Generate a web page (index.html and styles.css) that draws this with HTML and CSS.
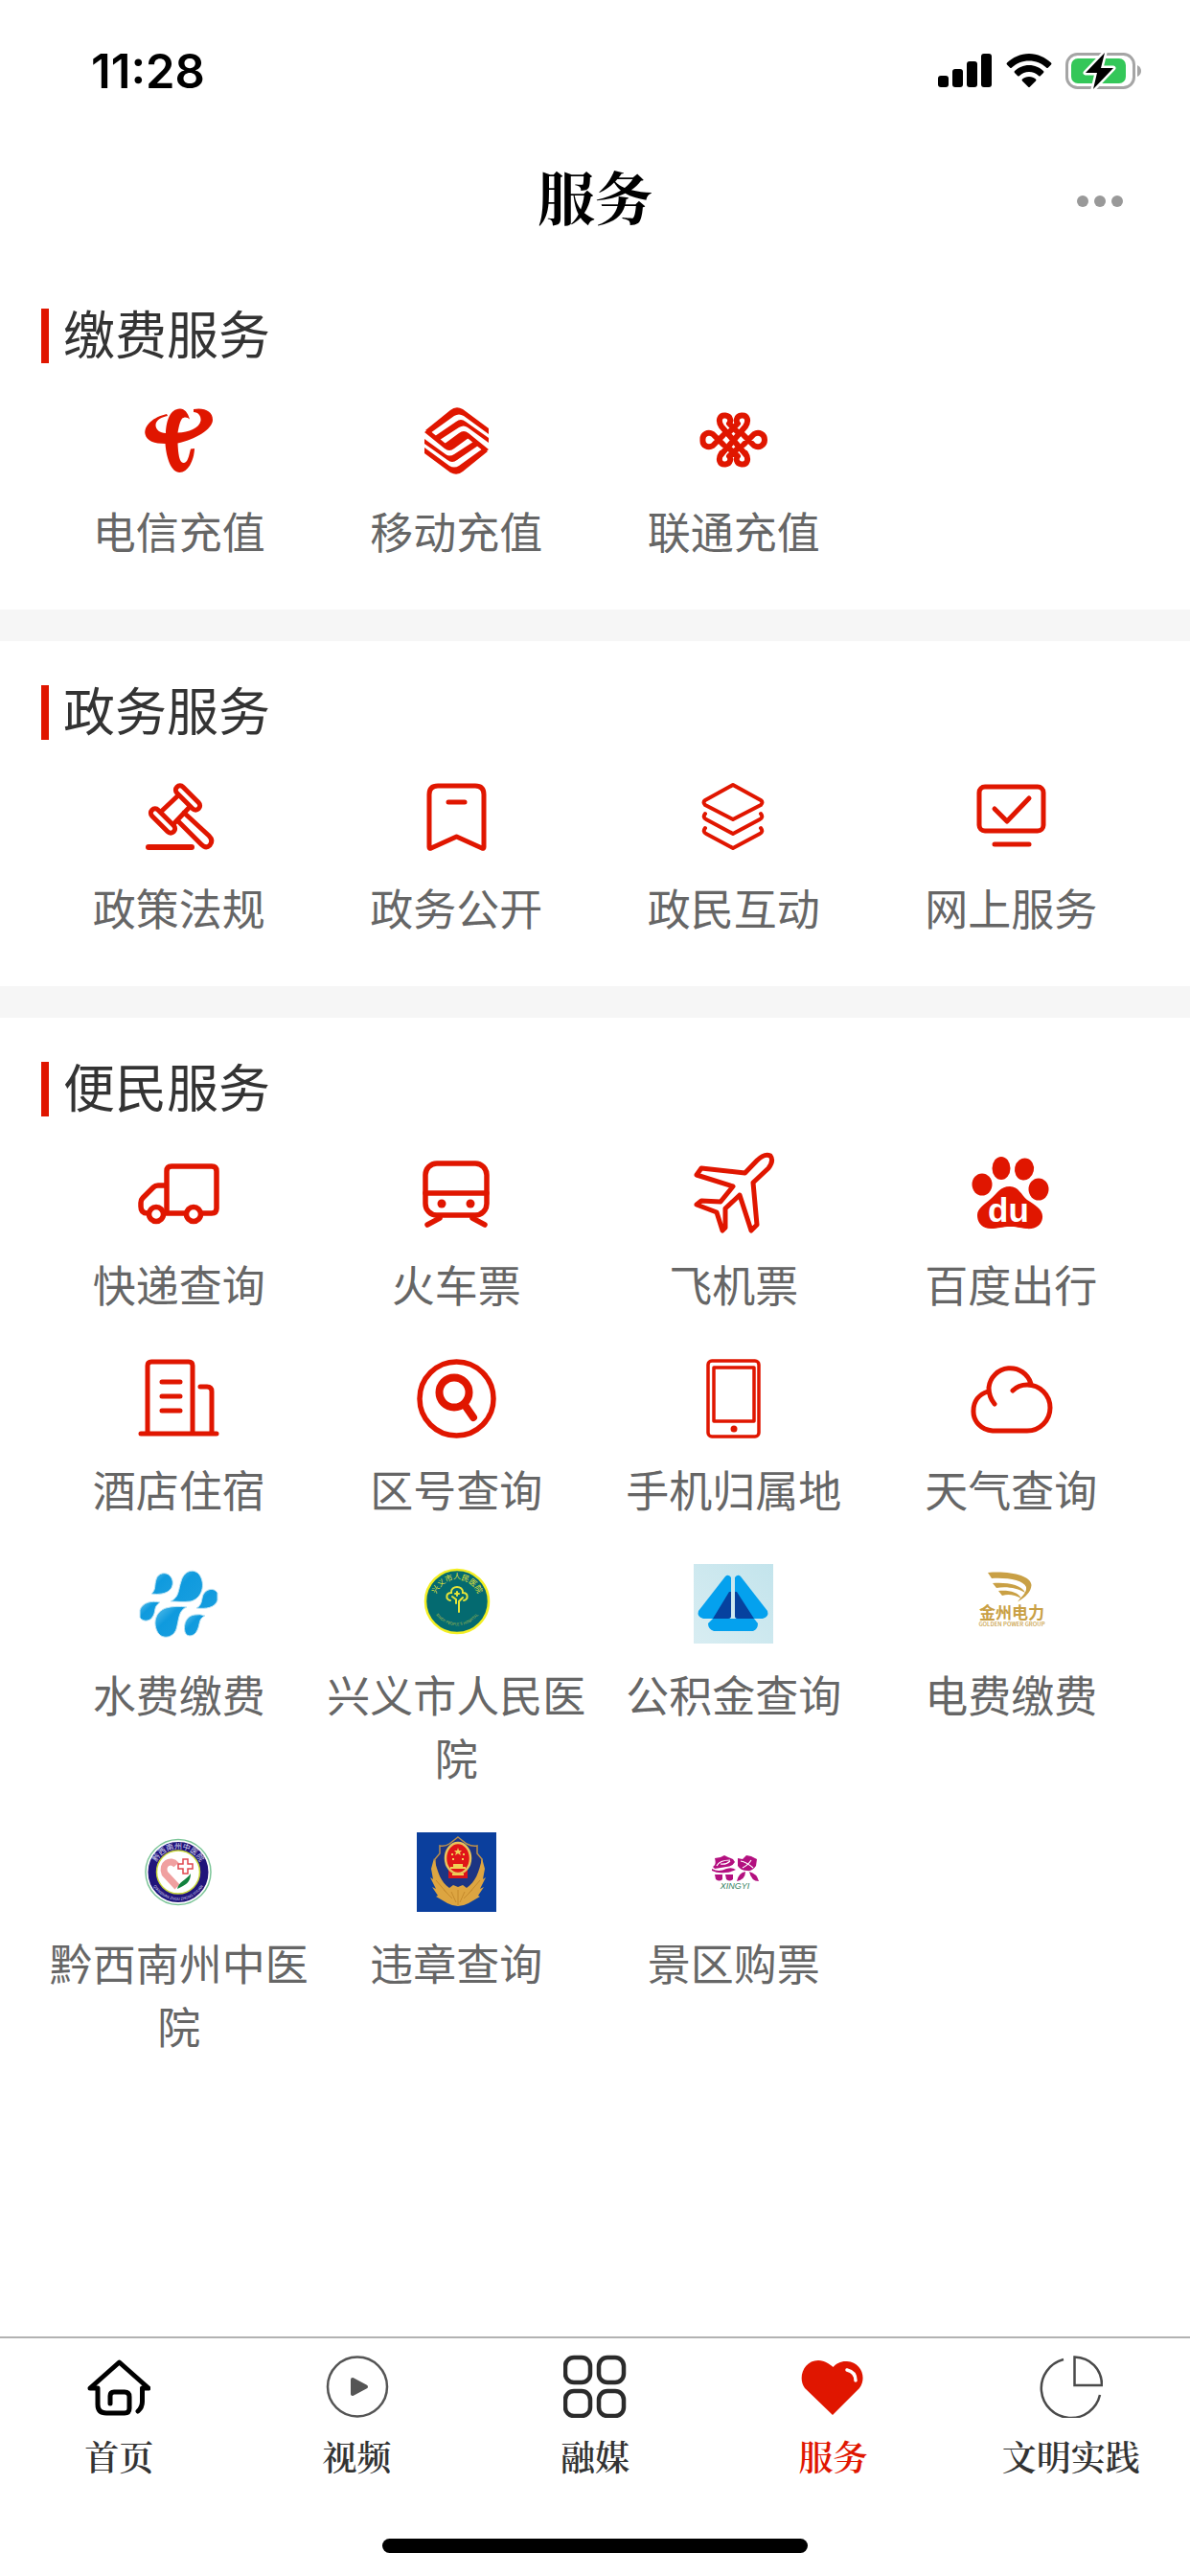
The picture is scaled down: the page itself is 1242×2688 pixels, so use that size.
FILE: index.html
```html
<!DOCTYPE html>
<html lang="zh-CN">
<head>
    <meta charset="UTF-8">
    <meta name="viewport" content="width=device-width, initial-scale=1.0">
    <title>服务</title>
    <link rel="stylesheet" href="styles.css">
</head>
<body>
    <div class="status-bar">
        <span class="time">11:28</span>
        <div class="status-icons">
            <svg width="57" height="36" viewBox="0 0 57 36">
                <rect x="0" y="23" width="11" height="12" rx="3"/>
                <rect x="15" y="16" width="11" height="19" rx="3"/>
                <rect x="30" y="8" width="11" height="27" rx="3"/>
                <rect x="45" y="0" width="11" height="35" rx="3"/>
            </svg>
            <svg width="48" height="36" viewBox="0 0 48 36">
                <path d="M24 0C33 0 41 4 47 9.500Q48 10.500 47 11.500L44 14.500Q43 15.500 42 14.500C37 10 31 7.500 24 7.500S11 10 6 14.500Q5 15.500 4 14.500L1 11.500Q0 10.500 1 9.500C7 4 15 0 24 0Z"/>
                <path d="M24 12C30 12 35 14.500 39 18Q40 19 39 20L36 23Q35 24 34 23C31 20.500 28 19 24 19S17 20.500 14 23Q13 24 12 23L9 20Q8 19 9 18C13 14.500 18 12 24 12Z"/>
                <path d="M24 24C27 24 29 25 31 26.500Q32 27.500 31 28.500L25 34.500Q24 35.500 23 34.500L17 28.500Q16 27.500 17 26.500C19 25 21 24 24 24Z"/>
            </svg>
            <svg width="80" height="40" viewBox="0 0 80 40">
                <rect x="1.500" y="2.500" width="70" height="35" rx="11" fill="none" stroke="#a5a5a5" stroke-width="3"/>
                <path d="M75 14Q79 16 79 20T75 26Z" fill="#a5a5a5"/>
                <rect x="6" y="7" width="57" height="26" rx="7" fill="#34c759"/>
                <path d="M41 1L21 22H33L29 39L50 17H37Z" stroke="#fff" stroke-width="5" stroke-linejoin="round"/>
                <path d="M41 1L21 22H33L29 39L50 17H37Z"/>
            </svg>
        </div>
    </div>

    <header class="header">
        <h1>服务</h1>
        <button class="more" aria-label="更多"><i></i><i></i><i></i></button>
    </header>

    <main class="content">
        <section class="section">
            <h2>缴费服务</h2>
            <div class="grid">
                <a class="item" href="#">
                    <svg class="icon solid" viewBox="0 0 83 83"><path d="M29 14C15 17 5 26 6.500 35C8 42 16 45 27.500 45C28.500 60 34 75 42.500 75C51 75 57.500 63 58 50L54 50.500C52 58 51 65 46.500 65C42 65 41 55 40.500 44.500C58 41 77 30 77 20C77 11 68 7 57 9L57 12C62 12 65 16 64.500 21C63 29 52 33 40.500 33.500C42 25 44 18 46.500 18C49 17 51 18 53 19.500C51 12 47 8 42.500 8.500C33 9 28.500 20 28 34C22 34 17 30 17.500 25C18 20 24 17 30 16Z"/></svg>
                    <span>电信充值</span>
                </a>
                <a class="item" href="#">
                    <svg class="icon solid" viewBox="0 0 83 83">
                        <g id="half">
                            <path d="M9 31L35 10Q41 5 48 9L75 29V35L49 16Q44 13 39 16L14 34Z"/>
                            <path d="M19 37L41 22Q46 18 51 22L75 39V44L53 28Q49 25 44 28L24 41Z"/>
                            <path d="M29 45L44 34Q49 30 54 34L75 51L71 54L54 40Q50 37 46 40L35 49Z"/>
                        </g>
                        <use href="#half" transform="rotate(180 41.500 42)"/>
                    </svg>
                    <span>移动充值</span>
                </a>
                <a class="item" href="#">
                    <svg class="icon line" viewBox="0 0 83 83" stroke-width="6">
                        <path d="M29 56L54 27C58 21 56 15 50 15.500C44 16 44 22 46 24L37 33M54 56L29 27C25 21 27 15 33 15.500C39 16 39 22 37 24L46 33"/>
                        <path d="M54 55C58 61 56 67 50 66.500C44 66 44 60 46 58L37 50M29 55C25 61 27 67 33 66.500C39 66 39 60 37 58L46 50"/>
                        <path d="M31 36L20 47C15 50 9 47 9.500 41C9 35 15 32 20 35L31 46M52 36L63 47C68 50 74 47 74 41S68 32 63 35L52 46"/>
                    </svg>
                    <span>联通充值</span>
                </a>
            </div>
        </section>

        <section class="section">
            <h2>政务服务</h2>
            <div class="grid">
                <a class="item" href="#">
                    <svg class="icon line" viewBox="0 0 83 83">
                        <rect x="35" y="17" width="32" height="9" rx="4.500" transform="rotate(45 51 21.500)"/>
                        <rect x="9" y="41" width="32" height="9" rx="4.500" transform="rotate(45 25 45.500)"/>
                        <path d="M41 19L23 36M53 31L36 49M47 37L73 61Q78 66 74 71Q70 75 65 70L40 45"/>
                        <path d="M10 73H55" stroke-width="6"/>
                    </svg>
                    <span>政策法规</span>
                </a>
                <a class="item" href="#">
                    <svg class="icon line" viewBox="0 0 83 83">
                        <path d="M13 73V18Q13 9 22 9H61Q70 9 70 18V73Q70 75 68 74L41.500 62L15 74Q13 75 13 73Z"/>
                        <path d="M33 26H50" stroke-width="5"/>
                    </svg>
                    <span>政务公开</span>
                </a>
                <a class="item" href="#">
                    <svg class="icon line" viewBox="0 0 83 83" stroke-width="4">
                        <path d="M41 8L70 24Q73 26 70 29L41 44L12 29Q9 26 12 24ZM12 38Q9 42 13 44L41 59L69 44Q73 42 70 38M12 53Q9 57 13 59L41 74L69 59Q73 57 70 53"/>
                    </svg>
                    <span>政民互动</span>
                </a>
                <a class="item" href="#">
                    <svg class="icon line" viewBox="0 0 83 83">
                        <rect x="8" y="10" width="67" height="46" rx="6"/>
                        <path d="M24 33L37 46L60 22"/>
                        <path d="M24 70H60" stroke-width="5"/>
                    </svg>
                    <span>网上服务</span>
                </a>
            </div>
        </section>

        <section class="section">
            <h2>便民服务</h2>
            <div class="grid">
                <a class="item" href="#">
                    <svg class="icon line" viewBox="0 0 83 83" stroke-width="5.500">
                        <path d="M29 61V18Q29 13 34 13H76Q81 13 81 18V57Q81 62 76 62H66M48 62H27M29 33H20Q17 33 15 35L4 46Q2 48 2 51V55Q2 62 9 62"/>
                        <circle cx="18" cy="63" r="7.500"/>
                        <circle cx="57" cy="63" r="7.500"/>
                    </svg>
                    <span>快递查询</span>
                </a>
                <a class="item" href="#">
                    <svg class="icon line" viewBox="0 0 83 83" stroke-width="5.500">
                        <rect x="9" y="10" width="64" height="54" rx="12"/>
                        <path d="M9 41H73M24 67L11 74M58 67L71 74"/>
                        <g class="dots"><circle cx="26" cy="52" r="4.500"/><circle cx="56" cy="52" r="4.500"/></g>
                    </svg>
                    <span>火车票</span>
                </a>
                <a class="item" href="#">
                    <svg class="icon line" viewBox="0 0 83 83">
                        <path d="M53.500 20L66 7Q74 -1 80 2Q84 7 78 15L62 30L66 74L60 80L48 43L33 57V77L30 80L24 61L3 53L8 49L28 50L41 34L3 22L8 15Z"/>
                    </svg>
                    <span>飞机票</span>
                </a>
                <a class="item" href="#">
                    <svg class="icon solid" viewBox="0 0 83 83">
                        <ellipse cx="11" cy="32" rx="10.500" ry="11.500"/>
                        <ellipse cx="31" cy="15" rx="9.500" ry="12"/>
                        <ellipse cx="55" cy="16" rx="10" ry="11.500" transform="rotate(12 55 16)"/>
                        <ellipse cx="70" cy="37" rx="10.500" ry="11.500"/>
                        <path d="M40 34C49 34 52 43 58 48C67 54 75 58 74 67C73 75 66 79 57 78C50 77 46 76 40 76C32 76 28 78 20 78C11 78 6 72 6 64C6 57 13 53 20 47C27 41 30 34 40 34Z"/>
                        <text class="du" x="17" y="71">du</text>
                    </svg>
                    <span>百度出行</span>
                </a>
                <a class="item" href="#">
                    <svg class="icon line" viewBox="0 0 83 83" stroke-width="5">
                        <path d="M9 77V7Q9 3 13 3H52Q56 3 56 7V77M64 29H71Q76 29 76 34V77M2 78H81M24 24H43M24 39H43M24 54H43"/>
                    </svg>
                    <span>酒店住宿</span>
                </a>
                <a class="item" href="#">
                    <svg class="icon line" viewBox="0 0 83 83" stroke-width="5.500">
                        <circle cx="41.500" cy="41.500" r="38.500"/>
                        <g stroke-width="8"><circle cx="39" cy="35" r="15.500"/><path d="M50 48L59 61"/></g>
                    </svg>
                    <span>区号查询</span>
                </a>
                <a class="item" href="#">
                    <svg class="icon line" viewBox="0 0 83 83" stroke-width="3.500">
                        <rect x="15" y="2" width="53" height="79" rx="4"/>
                        <rect x="21" y="9" width="42" height="56"/>
                        <g class="dots"><circle cx="42" cy="73" r="3.500"/></g>
                    </svg>
                    <span>手机归属地</span>
                </a>
                <a class="item" href="#">
                    <svg class="icon line" viewBox="0 0 83 83">
                        <path d="M24 47C19 41 18 36 18 30A22.500 22.500 0 0 1 62 26M43 33C48 28 54 27 58 27A24 24 0 0 1 58 75H22C10 74 1.500 65 2 54C2 44 8 37 17 34"/>
                    </svg>
                    <span>天气查询</span>
                </a>
                <a class="item" href="#">
                    <svg class="icon" viewBox="0 0 83 83">
                        <defs>
                            <linearGradient id="water" x1="0" y1="0" x2="1" y2="1">
                                <stop offset="0" stop-color="#5cc0ea"/>
                                <stop offset=".4" stop-color="#0f9ade"/>
                                <stop offset="1" stop-color="#1a9fdf"/>
                            </linearGradient>
                        </defs>
                        <g fill="url(#water)" stroke="#bfe5f5" stroke-width="1">
                            <path d="M13 31C18 27 16 22 18 16C20 9 28 8 32 12C38 18 36 29 24 31Q19 32 13 31Z"/>
                            <path d="M33 39C42 35 41 27 44 18C47 7 57 4 63 11C70 21 66 36 54 39C46 40 39 39 33 39Z"/>
                            <path d="M60 46C66 43 65 38 67 32C70 26 78 24 82 30V38C79 46 70 47 60 46Z"/>
                            <path d="M22 40C15 45 18 48 15 54C12 60 5 61 1 56V48C4 40 13 38 22 40Z"/>
                            <path d="M50 45C41 48 42 58 39 68C36 77 25 79 20 72C14 62 17 50 28 46C35 44 43 44 50 45Z"/>
                            <path d="M69 54C62 57 64 63 61 69C58 76 50 77 48 71C46 62 50 54 58 53Q64 52 69 54Z"/>
                        </g>
                    </svg>
                    <span>水费缴费</span>
                </a>
                <a class="item" href="#">
                    <svg class="icon" viewBox="0 0 83 83">
                        <defs>
                            <path id="arc1" d="M20 46A23 23 0 1 1 64 46"/>
                            <path id="arc2" d="M15 42A27.500 27.500 0 0 0 69 42"/>
                        </defs>
                        <circle cx="42" cy="39" r="33" fill="#046a70" stroke="#f3ee22" stroke-width="2.500"/>
                        <g fill="none" stroke="#e6e437" stroke-width="2" stroke-linecap="round">
                            <path d="M44 50V39L48 35M41 41V37L37 34M35 38C30 37 30 30 36 30C35 22 49 22 48 30C54 30 54 37 49 38M42 29V33M40 31H44"/>
                        </g>
                        <text class="seal"><textPath href="#arc1" startOffset="50%">兴义市人民医院</textPath></text>
                        <text class="seal-en"><textPath href="#arc2" startOffset="50%">XINGYI PEOPLE'S HOSPITAL</textPath></text>
                    </svg>
                    <span>兴义市人民医院</span>
                </a>
                <a class="item" href="#">
                    <svg class="icon" viewBox="0 0 83 83">
                        <defs>
                            <linearGradient id="sky" x1="1" y1="0" x2="0" y2="1">
                                <stop offset="0" stop-color="#c3e4ec"/>
                                <stop offset="1" stop-color="#d8edf2"/>
                            </linearGradient>
                        </defs>
                        <rect width="83" height="83" fill="url(#sky)"/>
                        <g fill="#04a1ee">
                            <path d="M33 13Q36 10 39 14V54Q39 57 36 57H10Q3 55 5 49Z"/>
                            <path d="M49 13Q46 10 43 14V54Q43 57 46 57H72Q79 55 77 49Z"/>
                            <path d="M20 57H63L67 62Q67 68 62 70H21Q15 68 15 62Z"/>
                        </g>
                        <path d="M37 29H39V54Q39 57 36 57H20ZM43 29H45L63 57H46Q43 57 43 54Z" fill="#06429f"/>
                    </svg>
                    <span>公积金查询</span>
                </a>
                <a class="item" href="#">
                    <svg class="icon gold" viewBox="0 0 83 83">
                        <path d="M17 9C40 7 62 12 62.500 22C62 29 57 34 48 39.500C52 34 58 30 57 24C54 17 38 14 21 15Z"/>
                        <path d="M22 20C36 19 52 21 56 30C48 25 36 23 26 25Z"/>
                        <path d="M28 28C38 27 49 29 52 36C45 32 38 31 32 33Z"/>
                        <text x="42" y="57" font-size="17" font-weight="700">金州电力</text>
                        <text x="42" y="65" font-size="6" font-weight="500">GOLDEN POWER GROUP</text>
                    </svg>
                    <span>电费缴费</span>
                </a>
                <a class="item" href="#">
                    <svg class="icon" viewBox="0 0 83 83">
                        <defs>
                            <path id="arc3" d="M16.500 47A25 25 0 1 1 65.500 47"/>
                            <path id="arc4" d="M11 41A30 30 0 0 0 71 41"/>
                        </defs>
                        <circle cx="41" cy="41.500" r="34" fill="#fff" stroke="#7cc598" stroke-width="1.500"/>
                        <circle cx="41" cy="41.500" r="27" fill="none" stroke="#20147a" stroke-width="9"/>
                        <circle cx="41" cy="41.500" r="22.500" fill="none" stroke="#c9d838" stroke-width="1.500"/>
                        <path d="M39 34C33 27 23 33 27 43L40 57" fill="none" stroke="#f0a0a0" stroke-width="7"/>
                        <path d="M46 28H51V33H56V38H51V43H46V38H41V33H46Z" fill="#fff" stroke="#e0474f" stroke-width="1.500"/>
                        <path d="M40 59C42 51 48 51 54 43C54 52 49 55 40 59Z" fill="#12813d"/>
                        <text class="seal light"><textPath href="#arc3" startOffset="50%">黔西南州中医院</textPath></text>
                        <text class="seal-en light"><textPath href="#arc4" startOffset="50%">QIANXINAN ZHOU ZHONG YIYUAN</textPath></text>
                    </svg>
                    <span>黔西南州中医院</span>
                </a>
                <a class="item" href="#">
                    <svg class="icon" viewBox="0 0 83 83">
                        <rect width="83" height="83" fill="#0b3f9d"/>
                        <path d="M43 5L52 12Q58 15 63 14V22L68 28Q67 53 60 62H26Q19 53 19 28L24 22V14Q30 15 34 12Z" fill="#1c3583" stroke="#b98f4c" stroke-width="1.500"/>
                        <path d="M18 27C22 42 25 52 34 58L38 55L43 57L48 55L52 58C61 52 65 42 68 27L71 38L69 49L72 47L66 59L70 57L64 66L66 67L54 74Q43 80 32 74L20 67L22 66L16 57L20 59L14 47L17 49L15 38Z" fill="#dda541"/>
                        <path d="M28 60L37 69M58 60L49 69M20 50L32 64M66 50L54 64M43 60V76M36 62L41 73M50 62L45 73" stroke="#c58a2c" stroke-width="1"/>
                        <path d="M33 39H53V48H33Z" fill="#dc141a"/>
                        <ellipse cx="43" cy="27" rx="13" ry="16" fill="#e01518" stroke="#e9c45b" stroke-width="2.500"/>
                        <path d="M38 33H48V36H51V38H35V36H38ZM43 16L44 19H47L45 21L46 24L43 22L40 24L41 21L39 19H42ZM36 22H38V24H36ZM48 22H50V24H48ZM37 27H39V29H37ZM47 27H49V29H47ZM37 43H49V45H37Z" fill="#f0cf55"/>
                    </svg>
                    <span>违章查询</span>
                </a>
                <a class="item" href="#">
                    <svg class="icon" viewBox="0 0 83 83">
                        <g fill="#b3107f">
                            <path d="M22 27L28 26L32 24L36 26L41 28L43 31Q40 36 34 36L22 38L20 36Q24 34 22 27Z"/>
                            <path d="M19 38Q26 42 34 38Q40 36 44 39Q38 42 33 42Q25 43 19 40Z"/>
                            <path d="M22 44H30V49Q27 52 23 49ZM33 44H41V49Q38 52 34 49Z"/>
                            <path d="M46 27L51 28L55 24L60 25L66 28L65 35Q61 41 56 40Q49 40 46 35Z"/>
                            <path d="M54 41Q54 49 45 51Q47 42 54 41ZM58 41Q66 43 68 51Q60 51 58 41Z"/>
                        </g>
                        <path d="M24 35Q27 29 38 29M28 33Q34 34 38 30M49 30Q55 31 62 37M51 37Q57 34 60 29" fill="none" stroke="#fff" stroke-width="1.200"/>
                        <text class="xingyi" x="43" y="59">XINGYI</text>
                    </svg>
                    <span>景区购票</span>
                </a>
            </div>
        </section>
    </main>

    <footer class="tab-bar">
        <nav>
            <a class="tab" href="#">
                <svg viewBox="0 0 66 66" fill="none" stroke="#000" stroke-width="5" stroke-linecap="round" stroke-linejoin="round">
                    <path d="M24 51V43Q24 39 28 39H39Q44 39 44 44V56Q44 61 39 61H20Q11 61 11 52V35H3L33.500 8L64 35H57.500V49Q57.500 55 53 59"/>
                </svg>
                <span>首页</span>
            </a>
            <a class="tab" href="#">
                <svg viewBox="0 0 66 66">
                    <circle cx="33" cy="33.500" r="31" fill="none" stroke="#555" stroke-width="2.500"/>
                    <path d="M28 26L42 33.500L28 41Z" fill="#555" stroke="#555" stroke-width="4" stroke-linejoin="round"/>
                </svg>
                <span>视频</span>
            </a>
            <a class="tab" href="#">
                <svg viewBox="0 0 66 66" fill="none" stroke="#2b2b2b" stroke-width="4.500">
                    <rect x="2" y="3" width="26" height="26" rx="9"/>
                    <rect x="37" y="3" width="26" height="26" rx="9"/>
                    <rect x="2" y="38" width="26" height="26" rx="9"/>
                    <rect x="37" y="38" width="26" height="26" rx="9"/>
                </svg>
                <span>融媒</span>
            </a>
            <a class="tab active" href="#">
                <svg viewBox="0 0 66 66">
                    <path d="M33 63L4 35C-4 24 3 6 18 6C25 6 30 10 33.500 13C37 9 42 6.500 48 7C63 8 69 24 61 35Z" fill="#e01600"/>
                    <path d="M48 16Q57 18 57 27" fill="none" stroke="#fff" stroke-width="3.500" stroke-linecap="round"/>
                </svg>
                <span>服务</span>
            </a>
            <a class="tab" href="#">
                <svg viewBox="0 0 66 66" fill="none" stroke="#4a4a4a" stroke-width="2.500">
                    <path d="M25 5A31 31 0 1 0 63 42M36.500 2.500V32H65C65 15 53 3 36.500 2.500Z"/>
                </svg>
                <span>文明实践</span>
            </a>
        </nav>
        <div class="home-indicator"></div>
    </footer>
</body>
</html>
```
FILE: styles.css
```css
* {
    box-sizing: border-box;
    margin: 0;
    padding: 0;
}
body {
    display: flex;
    flex-direction: column;
    min-height: 100vh;
    background: #fff;
    color: #333;
    font-family: "Noto Sans CJK SC", sans-serif;
}
a {
    color: inherit;
    text-decoration: none;
}

/* status bar */
.status-bar {
    display: flex;
    justify-content: space-between;
    align-items: center;
    height: 144px;
    padding: 4px 50px 0 95px;
}
.time {
    color: #000;
    font-family: Inter, sans-serif;
    font-size: 49px;
    font-weight: 600;
}
.status-icons {
    display: flex;
    align-items: center;
    gap: 14px;
}

/* page header */
.header {
    display: grid;
    grid-template-columns: 1fr auto 1fr;
    align-items: center;
    height: 132px;
    padding: 0 60px;
}
.header h1 {
    grid-column: 2;
    color: #000;
    font-family: "Noto Serif CJK SC", "Noto Sans CJK SC", serif;
    font-size: 60px;
    font-weight: 700;
    line-height: 72px;
    padding-bottom: 12px;
}
.more {
    display: flex;
    justify-self: end;
    gap: 6px;
    padding: 12px 10px;
    border: none;
    background: none;
    cursor: pointer;
}
.more i {
    width: 12px;
    height: 12px;
    border-radius: 50%;
    background: #999;
}

/* service sections */
.content {
    flex: 1;
}
.section {
    padding: 46px 42px 49px;
}
.section + .section {
    border-top: 33px solid #f6f6f6;
}
.section h2 {
    border-left: 8px solid #e01600;
    padding: 0 0 7px 15px;
    margin: 0 0 39px 1px;
    color: #333;
    font-size: 54px;
    font-weight: 400;
    line-height: 50px;
}
.grid {
    display: grid;
    grid-template-columns: repeat(4, 1fr);
    row-gap: 45px;
}
.item {
    display: flex;
    flex-direction: column;
    align-items: center;
    gap: 20px;
    padding: 0 8px;
    color: #666;
    font-size: 45px;
    line-height: 66px;
    text-align: center;
}
.icon {
    width: 83px;
    height: 83px;
    overflow: visible;
}
.solid {
    fill: #e01600;
}
.line {
    fill: none;
    stroke: #e01600;
    stroke-linecap: round;
    stroke-linejoin: round;
}
.line:not([stroke-width]) {
    stroke-width: 5px;
}
.dots {
    fill: #e01600;
    stroke: none;
}

/* lettering inside logos */
.du {
    fill: #fff;
    font-family: "Liberation Sans", sans-serif;
    font-size: 35px;
    font-weight: 700;
}
.seal {
    fill: #e6e437;
    font-size: 8px;
    text-anchor: middle;
}
.seal-en {
    fill: #a9bd4a;
    font-size: 4px;
    text-anchor: middle;
}
.light {
    fill: #dcdcf2;
}
.gold {
    fill: #c9a045;
    text-anchor: middle;
}
.xingyi {
    fill: #2f7d5b;
    font-family: "Liberation Sans", sans-serif;
    font-size: 9px;
    font-style: italic;
    text-anchor: middle;
}

/* bottom tabs */
.tab-bar {
    border-top: 2px solid #b2b2b2;
    padding: 17px 0 24px;
}
.tab-bar nav {
    display: grid;
    grid-template-columns: repeat(5, 1fr);
}
.tab {
    display: flex;
    flex-direction: column;
    align-items: center;
    gap: 15px;
    color: #333;
    font-family: "Noto Serif CJK SC", "Noto Sans CJK SC", serif;
    font-size: 36px;
    font-weight: 600;
    line-height: 50px;
}
.tab svg {
    width: 66px;
    height: 66px;
}
.tab.active {
    color: #e01600;
}
.home-indicator {
    width: 444px;
    height: 15px;
    margin: 61px auto 0;
    border-radius: 8px;
    background: #000;
}
```
